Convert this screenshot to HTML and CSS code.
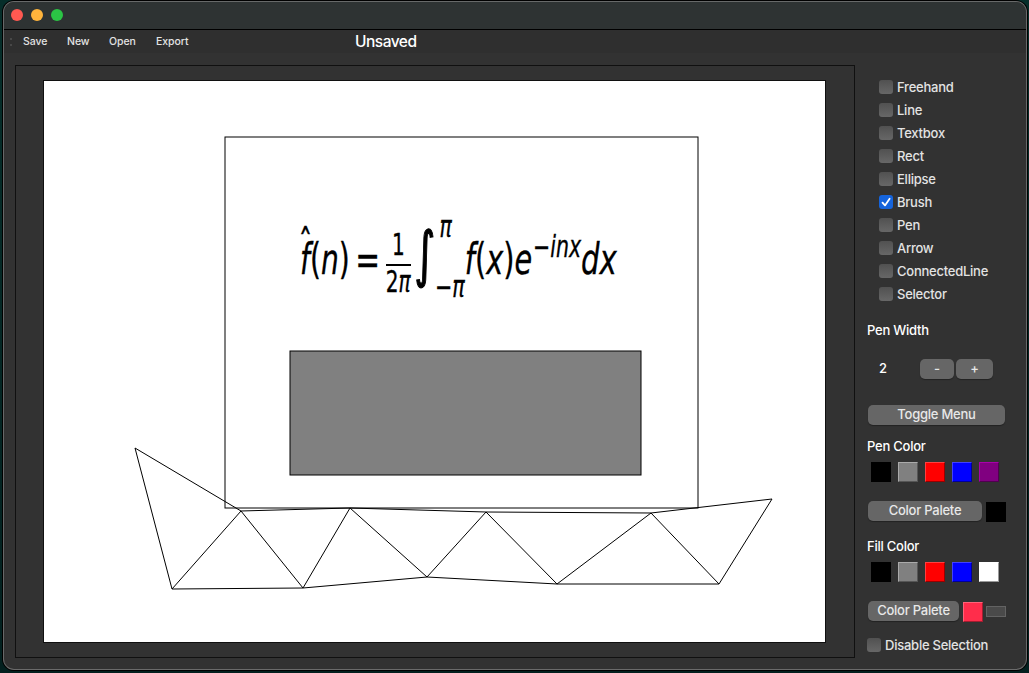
FILE: index.html
```html
<!DOCTYPE html>
<html lang="en">
<head>
<meta charset="utf-8">
<title>Unsaved</title>
<link rel="stylesheet" href="styles.css">
</head>
<body>
<div class="window">
  <header class="titlebar"><i class="light close"></i><i class="light minimize"></i><i class="light maximize"></i></header>
  <nav class="toolbar">
    <i class="grip"></i>
    <span class="save">Save</span><span class="new">New</span><span class="open">Open</span><span class="export">Export</span>
    <span class="doc">Unsaved</span>
  </nav>
  <div class="main">
    <div class="view">
      <svg class="canvas" width="783" height="563" viewBox="43 80 783 563">
        <rect class="sheet" x="43.5" y="80.5" width="782" height="562"/>
        <g class="shape">
          <rect x="225" y="137" width="473" height="371"/>
          <rect class="filled" x="290" y="351" width="351" height="124"/>
          <path d="M135 448L172 589L303 588L427 577L557 584H719L772 499L651 513L486 512L350 508L241 511Z"/>
          <path d="M172 589L241 511L303 588L350 508L427 577L486 512L557 584L651 513L719 584"/>
        </g>
        <g class="formula">
          <text class="big" transform="translate(298.6 259.5) scale(.65 1)">ˆ</text>
          <text class="big" transform="translate(300 274.3) scale(.655 1)"><tspan class="it">f</tspan>(<tspan class="it">n</tspan>)</text>
          <text class="big" transform="translate(355.3 274.3) scale(.69 1)">=</text>
          <text class="small" transform="translate(392 255) scale(.67 1)">1</text>
          <rect x="386" y="264" width="25" height="2"/>
          <text class="small" transform="translate(385.7 291.7) scale(.67 1)">2<tspan class="it">π</tspan></text>
          <text class="integral" transform="translate(414.5 275) scale(.66 1)">∫</text>
          <text class="small it" transform="translate(439.5 237.3) scale(.68 1)">π</text>
          <text class="small" transform="translate(435 297) scale(.69 1)">−<tspan class="it">π</tspan></text>
          <text class="big" transform="translate(464.8 274.3) scale(.67 1)"><tspan class="it">f</tspan>(<tspan class="it">x</tspan>)<tspan class="it">e</tspan></text>
          <text class="small" transform="translate(533 257.3) scale(.685 1)">−<tspan class="it">inx</tspan></text>
          <text class="big it" transform="translate(581 274.3) scale(.68 1)">dx</text>
        </g>
      </svg>
    </div>
    <aside class="panel">
      <div class="tools">
        <label class="check"><i class="box"></i><span>Freehand</span></label>
        <label class="check"><i class="box"></i><span>Line</span></label>
        <label class="check"><i class="box"></i><span>Textbox</span></label>
        <label class="check"><i class="box"></i><span>Rect</span></label>
        <label class="check"><i class="box"></i><span>Ellipse</span></label>
        <label class="check"><i class="box on"><svg width="14" height="14" viewBox="0 0 14 14"><path d="M3.5 7.6L6 10.4L10.6 3.8"/></svg></i><span>Brush</span></label>
        <label class="check"><i class="box"></i><span>Pen</span></label>
        <label class="check"><i class="box"></i><span>Arrow</span></label>
        <label class="check"><i class="box"></i><span>ConnectedLine</span></label>
        <label class="check"><i class="box"></i><span>Selector</span></label>
      </div>
      <h2 class="pen-width">Pen Width</h2>
      <div class="stepper"><span class="value">2</span><button class="minus">-</button><button class="plus">+</button></div>
      <button class="toggle">Toggle Menu</button>
      <h2 class="pen-color">Pen Color</h2>
      <div class="swatches"><i class="sw black"></i><i class="sw gray"></i><i class="sw red"></i><i class="sw blue"></i><i class="sw purple"></i></div>
      <div class="palette"><button class="wide">Color Palete</button><i class="sw black"></i></div>
      <h2 class="fill-color">Fill Color</h2>
      <div class="swatches"><i class="sw black"></i><i class="sw gray"></i><i class="sw red"></i><i class="sw blue"></i><i class="sw white"></i></div>
      <div class="palette"><button class="narrow">Color Palete</button><i class="sw rose"></i><i class="empty"></i></div>
      <label class="check disable"><i class="box"></i><span>Disable Selection</span></label>
    </aside>
  </div>
</div>
</body>
</html>
```

FILE: styles.css
```css
* { box-sizing: border-box; }
body {
  margin: 0; width: 1029px; height: 673px; overflow: hidden;
  padding: 1px 2px 3px 3px;
  background: linear-gradient(#062e2a, #03201f);
  font: 500 13px/16px Inter, "Liberation Sans", sans-serif;
  letter-spacing: -.24px;
  color: #e3e3e3;
}
i { display: block; flex: none; }
.window {
  width: 1024px; height: 669px; border: 1px solid #676969; border-bottom-color: #6b6b6b;
  border-radius: 11px; overflow: hidden; background: #323232;
  box-shadow: 0 0 0 1px #000;
}
.titlebar {
  height: 28px; background: #2e3333; border-bottom: 1px solid #000;
  display: flex; gap: 8px; padding: 7px 0 0 7px;
}
.light { width: 12px; height: 12px; border-radius: 50%; }
.close { background: #ff5951; }
.minimize { background: #ffb43c; }
.maximize { background: #2bc445; }
.toolbar {
  height: 23px; background: #2f2f2f; display: flex; align-items: center;
  padding-left: 6px; font-size: 10.5px; letter-spacing: -.05px;
}
.grip { width: 2px; height: 8px; border-top: 2px solid #484848; border-bottom: 2px solid #484848; margin-right: 11px; }
.save { width: 44px; }
.new { width: 42px; }
.open { width: 47px; }
.export { width: 199px; }
.doc { font-size: 15.5px; color: #fff; letter-spacing: -.5px; }
.main { display: flex; padding: 12px 0 0 11px; }
.view { flex: none; width: 840px; height: 593px; border: 1px solid #101010; padding: 14px 0 0 27px; }
.canvas { display: block; }
.sheet { fill: #fff; stroke: #101010; }
.shape { fill: none; stroke: #000; stroke-width: 1; }
.shape .filled { fill: #808080; }
.formula {
  font-family: "DejaVu Sans", sans-serif; font-weight: 400; letter-spacing: 0;
  fill: #000; stroke: #000; stroke-width: .35px;
}
.formula rect { stroke: none; }
.big { font-size: 43px; }
.small { font-size: 30px; }
.integral { font-size: 61px; stroke-width: 1.3px; }
.it { font-style: italic; }
.panel { flex: none; width: 155px; padding: 10px 0 0 12px; }
.tools { padding-left: 12px; }
.check { display: flex; align-items: center; gap: 4px; height: 23px; white-space: nowrap; }
.box { width: 14px; height: 14px; border-radius: 3px; background: linear-gradient(#515151, #676767); }
.on { background: #1564dc; }
.on svg { display: block; fill: none; stroke: #fff; stroke-width: 1.8; stroke-linecap: round; stroke-linejoin: round; }
h2 { margin: 0; font: inherit; color: #fff; height: 16px; }
.pen-width { margin-top: 17px; }
.stepper { display: flex; align-items: center; height: 20px; margin-top: 21px; padding-left: 12px; }
.value { width: 41px; color: #fff; padding-bottom: 2px; }
button {
  height: 20px; padding: 0 0 2px; border: 0; border-radius: 5px; background: #666; flex: none;
  font: inherit; letter-spacing: inherit; color: #e8e8e8; box-shadow: 0 1px 1px #222;
}
.minus { width: 34px; margin-right: 2px; }
.plus { width: 37px; }
.toggle { display: block; width: 137px; margin: 26px 0 0 1px; }
.pen-color { margin-top: 13px; }
.swatches { display: flex; gap: 7px; padding-left: 4px; margin-top: 8px; }
.sw { width: 20px; height: 20px; border: 1px solid; }
.black { background: #000; border-color: #000; }
.gray { background: #808080; border-color: #aaa #565656 #565656 #aaa; }
.red { background: #f00; border-color: #ff4040 #900 #900 #ff4040; }
.blue { background: #00f; border-color: #4040ff #009 #009 #4040ff; }
.purple { background: #800080; border-color: #a0a #500050 #500050 #a0a; }
.white { background: #fff; border-color: #fff #999 #999 #fff; }
.rose { background: #ff2d4b; border-color: #ff6379 #a31d30 #a31d30 #ff6379; }
.palette { display: flex; align-items: center; gap: 4px; height: 22px; padding-left: 1px; margin-top: 18px; }
.palette .sw { margin-top: 1px; }
.wide { width: 114px; }
.narrow { width: 91px; }
.empty { width: 20px; height: 11px; background: #4a4a4a; border: 1px solid #636363; margin-left: -1px; }
.fill-color { margin-top: 16px; }
.disable { margin-top: 11px; }
```
